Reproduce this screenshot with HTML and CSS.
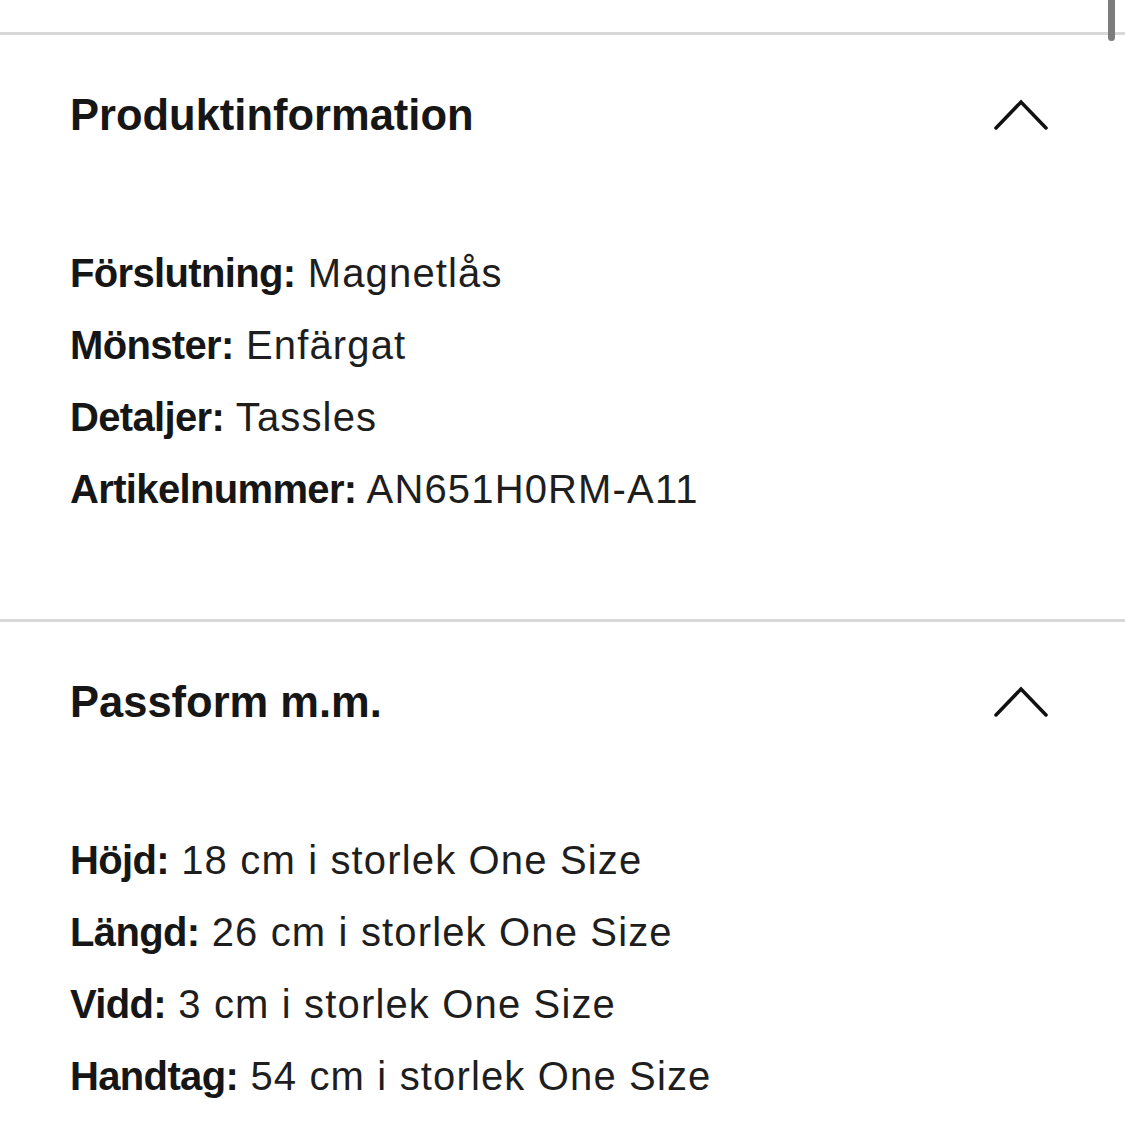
FILE: index.html
```html
<!DOCTYPE html>
<html lang="sv">
<head>
<meta charset="utf-8">
<title>Produktinformation</title>
<link rel="stylesheet" href="styles.css">
</head>
<body>
<div class="page">
  <div class="scrollbar"></div>
  <div class="top-rule"></div>

  <section class="acc acc-first">
    <div class="acc-head">
      <h2 class="acc-title">Produktinformation</h2>
      <svg class="chev" viewBox="0 0 56 32" width="56" height="32" aria-hidden="true">
        <polyline points="3,29 28,3 53,29" fill="none" stroke="#111" stroke-width="3.5" stroke-linecap="round" stroke-linejoin="miter"/>
      </svg>
    </div>
    <ul class="attrs">
      <li><b>Förslutning:</b> Magnetlås</li>
      <li><b>Mönster:</b> Enfärgat</li>
      <li><b>Detaljer:</b> Tassles</li>
      <li><b>Artikelnummer:</b> AN651H0RM-A11</li>
    </ul>
  </section>

  <section class="acc">
    <div class="acc-head">
      <h2 class="acc-title">Passform m.m.</h2>
      <svg class="chev" viewBox="0 0 56 32" width="56" height="32" aria-hidden="true">
        <polyline points="3,29 28,3 53,29" fill="none" stroke="#111" stroke-width="3.5" stroke-linecap="round" stroke-linejoin="miter"/>
      </svg>
    </div>
    <ul class="attrs">
      <li><b>Höjd:</b> 18 cm i storlek One Size</li>
      <li><b>Längd:</b> 26 cm i storlek One Size</li>
      <li><b>Vidd:</b> 3 cm i storlek One Size</li>
      <li><b>Handtag:</b> 54 cm i storlek One Size</li>
    </ul>
  </section>
</div>
</body>
</html>
```

FILE: styles.css
```css
html, body {
  margin: 0;
  padding: 0;
  background: #ffffff;
}

body {
  font-family: "Liberation Sans", Arial, Helvetica, sans-serif;
  color: #1b1b1b;
  width: 1125px;
  height: 1125px;
  overflow: hidden;
}

.page {
  position: relative;
  width: 1125px;
}

.scrollbar {
  position: absolute;
  top: -6px;
  left: 1108px;
  width: 7px;
  height: 47px;
  border-radius: 4px;
  background: #7c7c7c;
  z-index: 2;
}

.top-rule {
  height: 32px;
  border-bottom: 3px solid #d8d8d8;
}

.acc {
  padding: 0 76px 0 70px;
}

.acc-first {
  padding-bottom: 94px;
  border-bottom: 3px solid #d8d8d8;
}

.acc-head {
  display: flex;
  justify-content: space-between;
  align-items: center;
  height: 60px;
  padding-top: 50px;
}

.acc-title {
  margin: 0;
  font-size: 43.5px;
  font-weight: 700;
  line-height: 60px;
  color: #161616;
  letter-spacing: 0;
}

.chev {
  display: block;
}

.attrs {
  list-style: none;
  margin: 92px 0 0;
  padding: 0;
}

.attrs li {
  font-size: 40px;
  line-height: 72px;
  height: 72px;
  white-space: nowrap;
  color: #1e1e1e;
  letter-spacing: 1.15px;
}

.attrs b {
  font-weight: 700;
  color: #161616;
  letter-spacing: -0.65px;
}
```
